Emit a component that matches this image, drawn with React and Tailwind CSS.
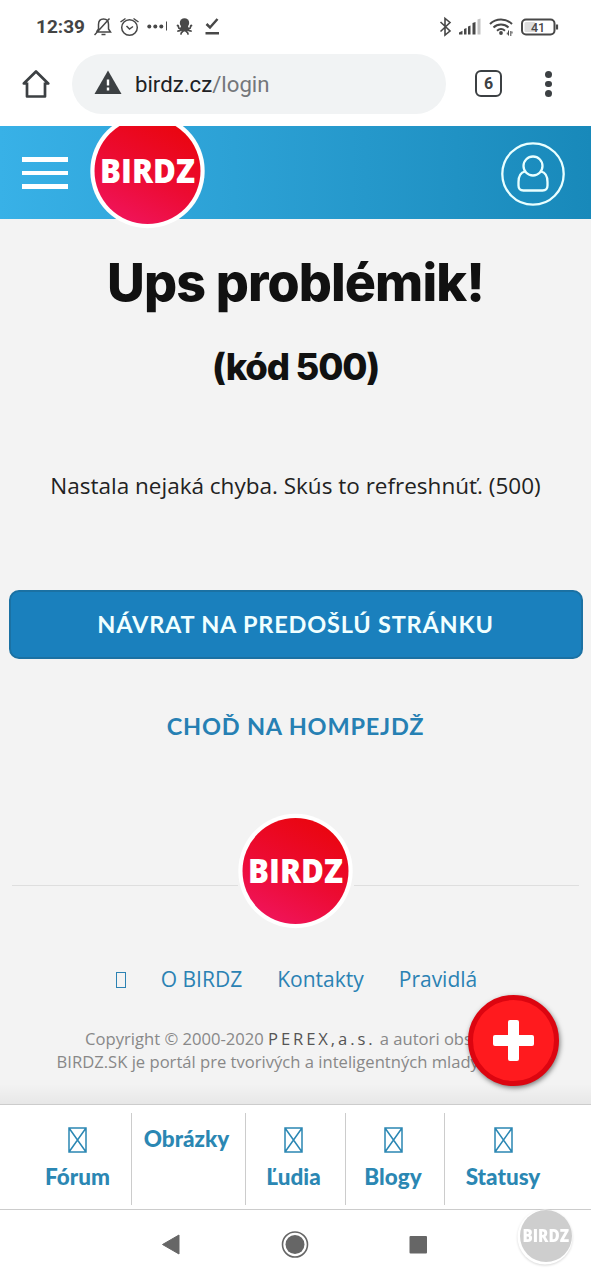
const Logo = ({ id, className, viewBox }) => (
  <svg className={className} viewBox={viewBox}>
    <defs>
      <linearGradient id={id} x1="0.3" y1="1" x2="0.75" y2="0.1">
        <stop offset="0" stopColor="#f0145a" />
        <stop offset="0.5" stopColor="#ec0b32" />
        <stop offset="1" stopColor="#ea0612" />
      </linearGradient>
    </defs>
    <circle cx="57.5" cy="58" r="57.2" fill="#fff" />
    <circle cx="57.5" cy="58" r="53" fill={`url(#${id})`} />
    <text x="10" y="70" textLength="95" lengthAdjust="spacingAndGlyphs" fill="#fff" fontFamily="'Open Sans', sans-serif" fontWeight="800" fontSize="33.5">BIRDZ</text>
  </svg>
);

const StatusBar = () => (
  <div className="flex h-[54px] items-center pl-9 pr-8 text-[#444]">
    <span className="w-[58px] whitespace-nowrap font-[Roboto,sans-serif] text-[19px] font-bold">12:39</span>
    <svg className="h-[22px] w-[132px]" viewBox="94 15.500 132 22" fill="none" stroke="#484848" strokeWidth="1.5">
      <path d="M97 31.5h13.500l-2-3v-4.500c0-3.500-2-5.500-5-5.500s-5 2-5 5.500v4.500l-2 3M101.500 34h4M94.500 34.500L109.500 18" />
      <circle cx="129.500" cy="27" r="7.800" />
      <path d="M120.500 21.500l5-3.500M138.500 21.500l-5-3.500M126.500 25.500l3 3 3.500-2.500" />
      <g fill="#484848" stroke="none">
        <circle cx="149.300" cy="26" r="2" /><circle cx="155.300" cy="26" r="2" /><circle cx="161.300" cy="26" r="2" />
        <ellipse cx="184.500" cy="22.500" rx="4.700" ry="4.800" />
        <path d="M181.500 24h6l1.500 5-2 2h-5l-2-2z" />
      </g>
      <path d="M166.500 21v9" strokeWidth="1" />
      <path strokeWidth="1.700" strokeLinecap="round" d="M182 27c-1 1.500-3.500 1.500-3.500-.5s-1-1.500-1-1.500M187 27c1 1.500 3.500 1.500 3.500-.5s1-1.500 1-1.500M182 28c-1 3-3 2-4 2.500M187 28c1 3 3 2 4 2.500M183.500 29c0 3-2.500 2-2.500 4.500M185.500 29c0 3 2.500 2 2.500 4.500" />
      <path strokeWidth="2.500" d="M206.500 23.500l3.500 3.500 7.500-8.500M205.500 32.700h13.500" />
    </svg>
    <svg className="ml-auto h-[22px] w-[121px]" viewBox="438 15.500 121 22" fill="none" stroke="#484848" strokeWidth="1.600">
      <path d="M440.500 21.500l9.500 9-5 4V18l5 4-9.500 9" />
      <g fill="#484848" stroke="none">
        <path d="M459 34v-2l3.500-1.800V34zM464 34v-5.500l2.500-1V34zM468 34v-8l2.500-1v9zM472.500 34V22.500l3-1V34z" />
        <path fill="#c4c4c4" d="M477.500 34V19l3-1v16z" />
        <circle cx="501" cy="32.500" r="1.900" />
      </g>
      <path strokeWidth="2" d="M490 23.500c6-6 16-6 22 0M493.500 27c4-4 11-4 15 0M497 30.300c2.500-2.200 5.500-2.200 8 0" />
      <path strokeWidth="1" d="M508.500 30v5M507.300 32v2M510.800 30.500v5M512 31v2" />
      <rect x="522" y="19" width="32.500" height="15" rx="4" strokeWidth="2" />
      <rect x="524.500" y="21.500" width="11" height="10" rx="1.500" fill="#ddd" stroke="none" />
      <path d="M557 24v5" strokeWidth="2.200" />
      <text x="531" y="31" fill="#484848" stroke="none" fontFamily="Roboto, sans-serif" fontWeight="500" fontSize="12.500">41</text>
    </svg>
  </div>
);

const AddressBar = () => (
  <div className="flex h-[71px] items-start">
    <svg className="ml-[22px] mt-[15px] h-[30px] w-[28px]" viewBox="0 0 28 30" fill="none" stroke="#3c4043" strokeWidth="2.700" strokeLinejoin="round">
      <path d="M5 14.500H1.800L14 2.500l12.200 12H23M5 13.500v14h18v-14" />
    </svg>
    <div className="ml-[22px] flex h-[60px] w-[374px] items-center rounded-full bg-[#f1f3f4] pl-[22px]">
      <svg className="h-7 w-7" viewBox="0 0 28 28">
        <path d="M14 .5L27.500 24H.5z" fill="#3c4043" />
        <path d="M14 9.500v6M14 17.500v3" stroke="#fff" strokeWidth="2.400" />
      </svg>
      <span className="ml-[13px] mt-[2px] whitespace-nowrap font-[Roboto,sans-serif] text-[22.2px] text-[#202124]">birdz.cz<span className="text-[#74777b]">/login</span></span>
    </div>
    <div className="ml-[29px] mt-4 flex h-[27px] w-[27px] items-center justify-center rounded-[6px] border-[2.5px] border-[#3c4043] font-[Roboto,sans-serif] text-[16px] font-bold text-[#3c4043]">6</div>
    <div className="ml-[43px] mt-[17px] flex flex-col gap-[3px]">
      <i className="h-[6.500px] w-[6.500px] rounded-full bg-[#3c4043]" />
      <i className="h-[6.500px] w-[6.500px] rounded-full bg-[#3c4043]" />
      <i className="h-[6.500px] w-[6.500px] rounded-full bg-[#3c4043]" />
    </div>
  </div>
);

const SiteHeader = () => (
  <header className="flex h-[93px] items-start bg-linear-to-r from-[#38b1e7] to-[#1889ba]">
    <div className="ml-[22px] mt-[31px] flex w-[46px] flex-col gap-[9px]">
      <i className="h-[4.500px] bg-white" />
      <i className="h-[4.500px] bg-white" />
      <i className="h-[4.500px] bg-white" />
    </div>
    <Logo id="top" className="ml-[22px] h-[103px] w-[116px] shrink-0" viewBox="0 13 116 103" />
    <svg className="ml-auto mr-[26px] mt-[16px] h-16 w-16" viewBox="0 0 64 64" fill="none" stroke="#e9ffff" strokeWidth="2.300">
      <circle cx="32" cy="32" r="30.700" />
      <circle cx="32" cy="24" r="9.500" />
      <path d="M24 29.500c-4.500 1-6.500 5-6.500 10.500v3.500c0 3 2 5 5 5h19c3 0 5-2 5-5v-3.500c0-5.500-2-9.500-6.500-10.500" />
    </svg>
  </header>
);

const Tofu = () => (
  <svg className="h-[26px] w-[19px]" viewBox="0 0 19 26" fill="none" stroke="#2b87b3" strokeWidth="1.500">
    <path d="M1 1h17v24H1zM1 1l17 24M18 1L1 25" />
  </svg>
);

const Tab = ({ label, icon = true, edge = "border-r border-[#ccc] pr-[4px]" }) => (
  <div className={`flex h-[92px] flex-col items-center pt-[13.5px] ${edge}`}>
    {icon && <Tofu />}
    <span className={`whitespace-nowrap font-[Lato,sans-serif] text-[22.5px] font-black leading-6 ${icon ? "mt-3" : ""}`}>{label}</span>
  </div>
);

export default function App() {
  return (
    <div className="h-[1280px] w-[591px] overflow-hidden bg-[#f3f3f3]">
      <div className="h-[126px] bg-white">
        <StatusBar />
        <AddressBar />
      </div>
      <SiteHeader />
      <main className="flex h-[591px] flex-col items-center whitespace-nowrap">
        <h1 className="mt-[30px] font-[Inter,sans-serif] text-[52px] font-extrabold leading-[68px] tracking-[-0.9px] text-[#111]">Ups problémik!</h1>
        <h2 className="mt-[26px] font-[Inter,sans-serif] text-[36.5px] font-extrabold leading-[48px] tracking-[-1.2px] text-[#111]">(kód 500)</h2>
        <p className="mt-[79px] font-['Open_Sans',sans-serif] text-[22.5px] leading-[32px] text-[#222]">Nastala nejaká chyba. Skús to refreshnúť. (500)</p>
        <button className="mt-[88px] h-[69px] w-[574px] shrink-0 rounded-[10px] border-[2.5px] border-[#1b71a3] bg-[#1a80bd] font-[Lato,sans-serif] text-[23.5px] font-bold tracking-[0.8px] text-[#f0ffff]">NÁVRAT NA PREDOŠLÚ STRÁNKU</button>
        <a className="mt-[51px] font-[Lato,sans-serif] text-[23.5px] font-bold leading-[32px] tracking-[0.8px] text-[#2680b3]">CHOĎ NA HOMPEJDŽ</a>
      </main>
      <footer className="relative h-[294px]">
        <div className="flex h-[150px] items-start pl-3 pr-3">
          <div className="mt-[75px] h-px flex-1 bg-[#dedede]" />
          <Logo id="foot" className="mt-[3px] h-[116px] w-[116px]" viewBox="0 0 116 116" />
          <div className="mt-[75px] h-px flex-1 bg-[#dedede]" />
        </div>
        <nav className="flex h-[40px] items-center justify-center gap-[35px] pl-[2px] font-['Open_Sans',sans-serif] text-[21px] text-[#2b82b3]">
          <i className="h-4 w-[10px] border border-[#2b82b3]" />
          <span>O BIRDZ</span>
          <span>Kontakty</span>
          <span>Pravidlá</span>
        </nav>
        <div className="mt-[27px] whitespace-nowrap text-center font-['Open_Sans',sans-serif] text-[16.600px] leading-[23px] text-[#888]">
          <p>Copyright © 2000-2020 <span className="tracking-[2.900px] text-[#555]">PEREX,a.s.</span> a autori obsahu.</p>
          <p>BIRDZ.SK je portál pre tvorivých a inteligentných mladých ľudí.</p>
        </div>
        <div className="absolute bottom-0 h-5 w-full bg-linear-to-b from-transparent to-black/5" />
        <button className="absolute left-[468px] top-[185px] flex h-[91px] w-[91px] items-center justify-center rounded-full border-[5px] border-[#dc0510] bg-[#ff1a1e] shadow-[1px_2px_5px_rgba(0,0,0,.5)]">
          <svg className="h-[41px] w-[41px]" viewBox="0 0 41 41" fill="#fff">
            <rect x="15" width="11" height="41" rx="2" />
            <rect y="15" width="41" height="11" rx="2" />
          </svg>
        </button>
      </footer>
      <nav className="grid h-[106px] grid-cols-[108px_114px_100px_99px_118px] border-y-[1.500px] border-[#ccc] bg-white pl-6 pt-[8px] text-[#2b87b3]">
        <Tab label="Fórum" edge="border-r border-[#ccc]" />
        <Tab label="Obrázky" icon={false} />
        <Tab label="Ľudia" />
        <Tab label="Blogy" />
        <Tab label="Statusy" edge="pr-[2px]" />
      </nav>
      <div className="relative h-[70px] bg-white">
        <svg className="h-[70px] w-[591px]" viewBox="0 0 591 70" fill="#666">
          <path d="M162.500 34.500L179 25v19z" stroke="#666" strokeLinejoin="round" />
          <circle cx="295" cy="34.500" r="12.500" fill="none" stroke="#666" strokeWidth="1.600" />
          <circle cx="295" cy="34.500" r="9.500" />
          <rect x="409.500" y="26" width="17.500" height="17.500" rx="1" />
        </svg>
        <svg className="absolute left-[515px] top-[-4px] h-[64px] w-[64px] drop-shadow-[0_1px_1px_rgba(0,0,0,.15)]" viewBox="0 0 64 64">
          <circle cx="30" cy="31" r="27.500" fill="#fff" />
          <circle cx="31" cy="30" r="26" fill="#cecece" />
          <text x="7.500" y="35.500" textLength="46.500" lengthAdjust="spacingAndGlyphs" fill="#fff" fontFamily="'Open Sans', sans-serif" fontWeight="800" fontSize="17">BIRDZ</text>
        </svg>
      </div>
    </div>
  );
}
